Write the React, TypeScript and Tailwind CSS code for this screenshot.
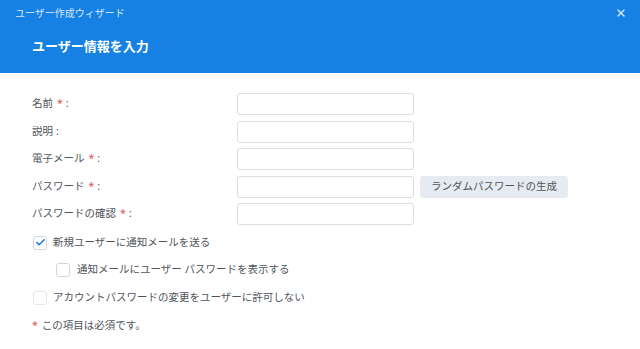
import { X, Check } from "lucide-react";

const fields = [
  { label: "名前", required: true },
  { label: "説明", required: false },
  { label: "電子メール", required: true },
  { label: "パスワード", required: true, action: "ランダムパスワードの生成" },
  { label: "パスワードの確認", required: true },
];

function Box({ checked, muted }: { checked?: boolean; muted?: boolean }) {
  return (
    <span
      className={
        "flex h-[14px] w-[14px] items-center justify-center rounded-[3px] border bg-white " +
        (muted ? "border-[#e3e7ec]" : "border-[#cfd6de]")
      }
    >
      {checked && <Check className="h-[11px] w-[11px] text-[#1a7fe0]" strokeWidth={3.5} />}
    </span>
  );
}

export default function App() {
  return (
    <div
      className="h-[349px] w-[640px] overflow-hidden bg-white text-[10.5px] text-[#50555c]"
      style={{ fontFamily: '"Noto Sans", "Noto Sans CJK JP", sans-serif' }}
    >
      {/* ヘッダー */}
      <div className="h-[73px] bg-[#1680e3] text-white">
        <div className="flex h-[26px] items-center justify-between pl-[15px] pr-[13px]">
          <span className="text-[10px] text-[#d6e8fb]">ユーザー作成ウィザード</span>
          <X className="h-[12px] w-[12px] text-[#cfe4fa]" strokeWidth={3} />
        </div>
        <div className="flex h-[42px] items-center pl-[32px] text-[13px] font-bold">ユーザー情報を入力</div>
      </div>

      {/* フォーム */}
      <div className="flex flex-col gap-[5.5px] pl-[32px] pt-[20px]">
        {fields.map((f) => (
          <div key={f.label} className="flex h-[22px] items-center">
            <div className="w-[205px]">
              {f.label}
              {f.required && <span className="ml-[4px] text-[#e0505a]">*</span>}
              <span className="ml-[3px]">:</span>
            </div>
            <div className="h-[22px] w-[177px] rounded-[3px] border border-[#d9dee4] bg-white" />
            {f.action && (
              <button className="ml-[6px] h-[22px] w-[148px] rounded-[3px] bg-[#e6ebf1] text-[10.5px] text-[#50555c]">
                {f.action}
              </button>
            )}
          </div>
        ))}
      </div>

      <div className="flex flex-col pl-[33px] pt-[4px]">
        <label className="flex h-[27px] items-center gap-[6px]">
          <Box checked />
          <span>新規ユーザーに通知メールを送る</span>
        </label>
        <label className="flex h-[28px] items-center gap-[7px] pl-[23px]">
          <Box />
          <span>通知メールにユーザー パスワードを表示する</span>
        </label>
        <label className="flex h-[28px] items-center gap-[6px]">
          <Box muted />
          <span>アカウントパスワードの変更をユーザーに許可しない</span>
        </label>
        <div className="mt-[6px] -ml-[1px]">
          <span className="text-[#e0505a]">*</span>
          <span className="ml-[4px]">この項目は必須です。</span>
        </div>
      </div>
    </div>
  );
}
